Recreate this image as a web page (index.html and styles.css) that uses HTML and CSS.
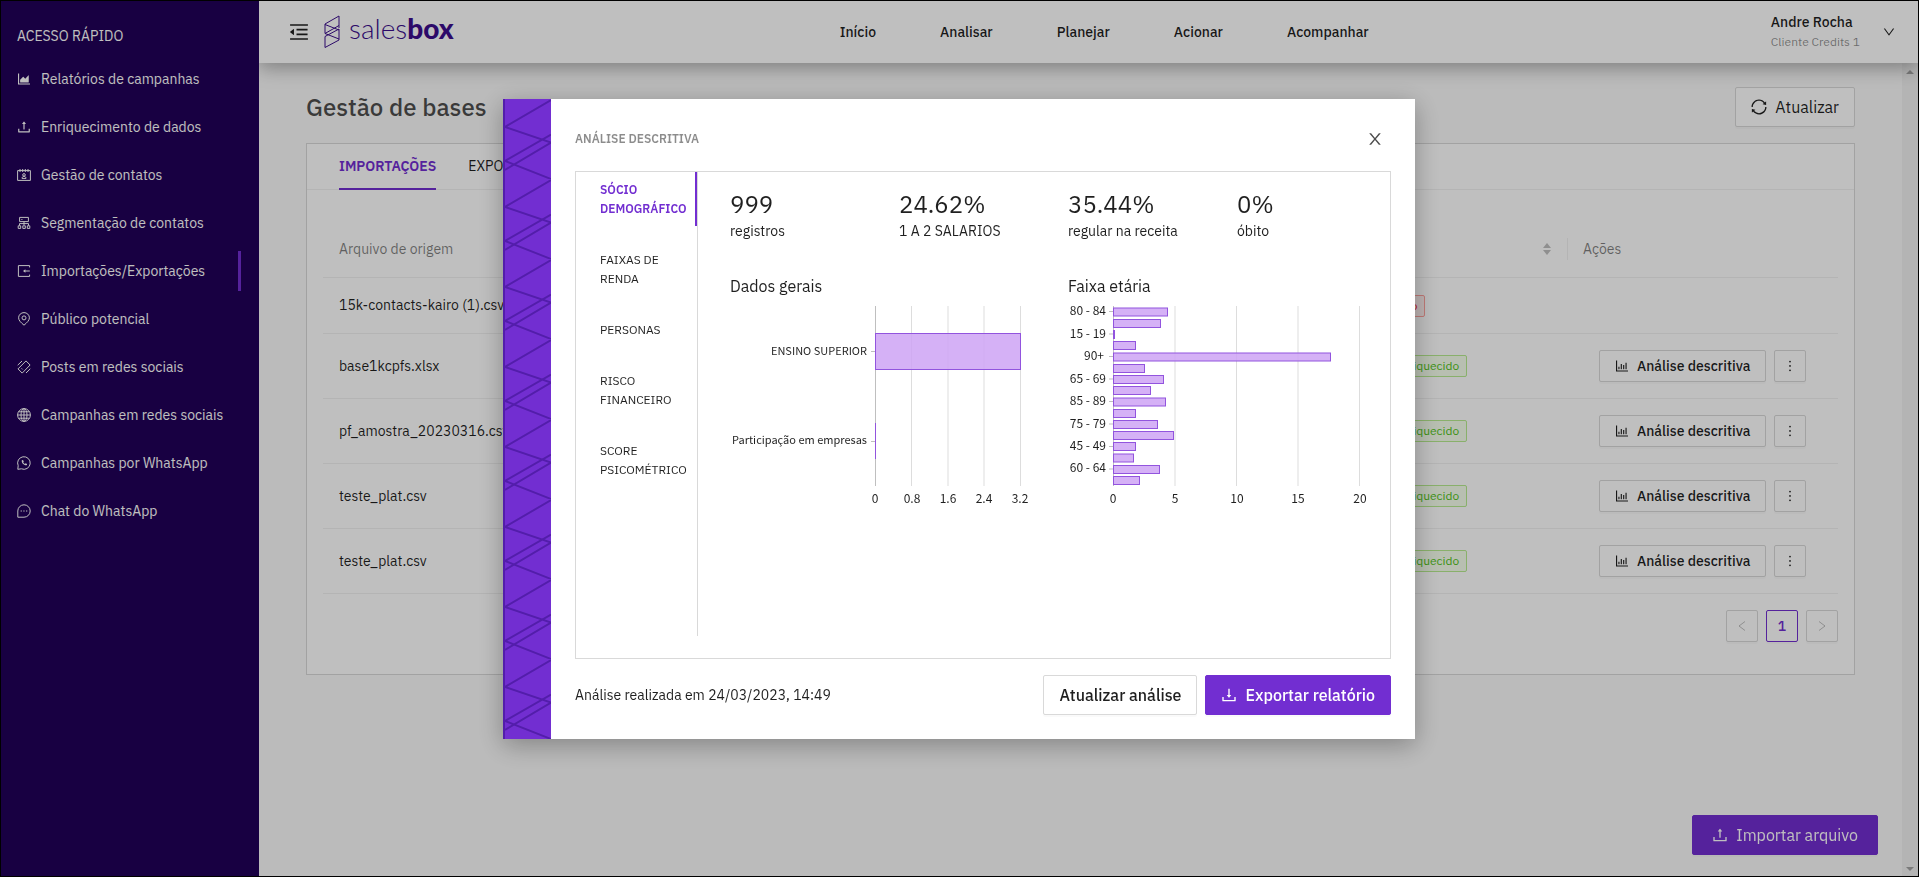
FILE: index.html
```html
<!DOCTYPE html>
<html lang="pt-BR">

<head>
    <meta charset="UTF-8">
    <meta name="viewport" content="width=device-width, initial-scale=1.0">
    <title>Salesbox - Gestão de bases</title>
    <link rel="stylesheet" href="styles.css">
</head>

<body>
    <svg class="sprite" aria-hidden="true">
        <symbol id="icon-area-chart" viewBox="64 64 896 896">
            <path d="M888 792H200V168c0-4.4-3.6-8-8-8h-56c-4.4 0-8 3.6-8 8v688c0 4.4 3.6 8 8 8h752c4.4 0 8-3.6 8-8v-56c0-4.4-3.6-8-8-8zm-616-64h536c4.4 0 8-3.6 8-8V284c0-7.2-8.7-10.7-13.7-5.7L592 488.6l-125.4-124a8.03 8.03 0 00-11.3 0l-189 189.6a7.87 7.87 0 00-2.3 5.6V720c0 4.4 3.6 8 8 8z" />
        </symbol>
        <symbol id="icon-upload" viewBox="64 64 896 896">
            <path d="M400 317.7h73.9V656c0 4.4 3.6 8 8 8h60c4.4 0 8-3.6 8-8V317.7H624c6.7 0 10.4-7.7 6.3-12.9L518.3 163a8 8 0 00-12.6 0l-112 141.7c-4.1 5.3-.4 13 6.3 13zM878 626h-60c-4.4 0-8 3.6-8 8v154H214V634c0-4.4-3.6-8-8-8h-60c-4.4 0-8 3.6-8 8v198c0 17.7 14.3 32 32 32h684c17.7 0 32-14.3 32-32V634c0-4.4-3.6-8-8-8z" />
        </symbol>
        <symbol id="icon-download" viewBox="64 64 896 896">
            <path d="M505.7 661a8 8 0 0012.6 0l112-141.7c4.1-5.2.4-12.9-6.3-12.9h-74.1V168c0-4.4-3.6-8-8-8h-60c-4.4 0-8 3.6-8 8v338.3H400c-6.7 0-10.4 7.7-6.3 12.9l112 141.8zM878 626h-60c-4.4 0-8 3.6-8 8v154H214V634c0-4.4-3.6-8-8-8h-60c-4.4 0-8 3.6-8 8v198c0 17.7 14.3 32 32 32h684c17.7 0 32-14.3 32-32V634c0-4.4-3.6-8-8-8z" />
        </symbol>
        <symbol id="icon-bar-chart" viewBox="64 64 896 896">
            <path d="M888 792H200V168c0-4.4-3.6-8-8-8h-56c-4.4 0-8 3.6-8 8v688c0 4.4 3.6 8 8 8h752c4.4 0 8-3.6 8-8v-56c0-4.4-3.6-8-8-8zm-600-80h56c4.4 0 8-3.6 8-8V560c0-4.4-3.6-8-8-8h-56c-4.4 0-8 3.6-8 8v144c0 4.4 3.6 8 8 8zm152 0h56c4.4 0 8-3.6 8-8V384c0-4.4-3.6-8-8-8h-56c-4.4 0-8 3.6-8 8v320c0 4.4 3.6 8 8 8zm152 0h56c4.4 0 8-3.6 8-8V462c0-4.4-3.6-8-8-8h-56c-4.4 0-8 3.6-8 8v242c0 4.4 3.6 8 8 8zm152 0h56c4.4 0 8-3.6 8-8V304c0-4.4-3.6-8-8-8h-56c-4.4 0-8 3.6-8 8v400c0 4.4 3.6 8 8 8z" />
        </symbol>
        <symbol id="icon-more" viewBox="64 64 896 896">
            <path d="M456 231a56 56 0 10112 0 56 56 0 10-112 0zm0 280a56 56 0 10112 0 56 56 0 10-112 0zm0 280a56 56 0 10112 0 56 56 0 10-112 0z" />
        </symbol>
        <symbol id="icon-down" viewBox="64 64 896 896">
            <path d="M884 256h-75c-5.1 0-9.9 2.5-12.9 6.6L512 654.2 227.9 262.6c-3-4.1-7.8-6.6-12.9-6.6h-75c-6.5 0-10.3 7.4-6.5 12.7l352.6 486.1c12.8 17.6 39 17.6 51.7 0l352.6-486.1c3.9-5.3.1-12.7-6.4-12.7z" />
        </symbol>
        <symbol id="icon-close" viewBox="64 64 896 896">
            <path d="M563.8 512l262.5-312.9c4.4-5.2.7-13.1-6.1-13.1h-79.8c-4.7 0-9.2 2.1-12.3 5.7L511.6 449.8 295.1 191.7c-3-3.6-7.5-5.7-12.3-5.7H203c-6.8 0-10.5 7.9-6.1 13.1L459.4 512 196.9 824.9A7.95 7.95 0 00203 838h79.8c4.7 0 9.2-2.1 12.3-5.7l216.5-258.1 216.5 258.1c3 3.6 7.5 5.7 12.3 5.7h79.8c6.8 0 10.5-7.9 6.1-13.1L563.8 512z" />
        </symbol>
        <symbol id="icon-sync" viewBox="64 64 896 896">
            <path d="M168 504.2c1-43.7 10-86.1 26.9-126 17.3-41 42.1-77.7 73.7-109.4S337 212.3 378 195c42.4-17.9 87.4-27 133.9-27s91.5 9.1 133.8 27A341.5 341.5 0 01755 268.8c9.9 9.9 19.2 20.4 27.8 31.4l-60.2 47a8 8 0 003 14.1l175.7 43c5 1.2 9.9-2.6 9.9-7.7l.8-180.9c0-6.7-7.7-10.5-12.9-6.3l-56.4 44.1C765.8 155.1 646.2 92 511.8 92 282.7 92 96.3 275.6 92 503.8a8 8 0 008 8.2h60c4.4 0 7.9-3.5 8-7.8zm756 7.8h-60c-4.4 0-7.9 3.5-8 7.8-1 43.7-10 86.1-26.9 126-17.3 41-42.1 77.8-73.7 109.4A342.45 342.45 0 01512.1 856a342.24 342.24 0 01-243.2-100.8c-9.9-9.9-19.2-20.4-27.8-31.4l60.2-47a8 8 0 00-3-14.1l-175.7-43c-5-1.2-9.9 2.6-9.9 7.7l-.7 181c0 6.7 7.7 10.5 12.9 6.3l56.4-44.1C258.2 868.9 377.8 932 512.2 932c229.2 0 415.5-183.7 419.8-411.8a8 8 0 00-8-8.2z" />
        </symbol>
        <symbol id="icon-menu-fold" viewBox="64 64 896 896">
            <path d="M408 442h480c4.4 0 8-3.6 8-8v-56c0-4.4-3.6-8-8-8H408c-4.4 0-8 3.6-8 8v56c0 4.4 3.6 8 8 8zm-8 204c0 4.4 3.6 8 8 8h480c4.4 0 8-3.6 8-8v-56c0-4.4-3.6-8-8-8H408c-4.4 0-8 3.6-8 8v56zm504-486H120c-4.4 0-8 3.6-8 8v56c0 4.4 3.6 8 8 8h784c4.4 0 8-3.6 8-8v-56c0-4.4-3.6-8-8-8zm0 632H120c-4.4 0-8 3.6-8 8v56c0 4.4 3.6 8 8 8h784c4.4 0 8-3.6 8-8v-56c0-4.4-3.6-8-8-8zM115.4 518.9L271.7 642c5.8 4.6 14.4.5 14.4-6.9V388.9c0-7.4-8.5-11.5-14.4-6.9L115.4 505.1a8.74 8.74 0 000 13.8z" />
        </symbol>
    </svg>

    <div class="app">
        <aside class="sidebar">
            <h2>Acesso rápido</h2>
            <ul>
                <li><a href="#"><svg class="icon"><use href="#icon-area-chart" /></svg>Relatórios de campanhas</a></li>
                <li><a href="#"><svg class="icon"><use href="#icon-upload" /></svg>Enriquecimento de dados</a></li>
                <li><a href="#">
                    <svg class="icon icon-line" viewBox="0 0 14 14">
                        <path d="M.6 2.6h12.8v9.8H.6zM3 1v3M5.7 1v3M8.3 1v3M11 1v3M5 10.4c0-1.3.8-2 2-2s2 .7 2 2z" />
                        <circle cx="7" cy="6.9" r="1.3" />
                    </svg>Gestão de contatos</a></li>
                <li><a href="#">
                    <svg class="icon icon-line" viewBox="0 0 14 14">
                        <path d="M2.6 1.4h8.8v4.2H2.6zM7 5.6V9M2.5 9.6V7.6h9v2M4.4 3.5h1M1.2 9.8h2.5v2.6H1.2zM5.8 9.8h2.5v2.6H5.8zM10.3 9.8h2.5v2.6h-2.5z" />
                    </svg>Segmentação de contatos</a></li>
                <li class="active"><a href="#">
                    <svg class="icon icon-line" viewBox="0 0 14 14">
                        <path d="M12.6 3.4V1.6H1.4v10.8h11.2v-1.8M7 7h5.8" />
                        <path d="M6 7l2.4-1.8v3.6z" class="fill" />
                    </svg>Importações/Exportações</a></li>
                <li><a href="#">
                    <svg class="icon icon-line" viewBox="0 0 14 14">
                        <path d="M7 13.2c-3-2.6-5.4-4.8-5.4-7.4a5.4 5.2 0 0110.8 0c0 2.6-2.4 4.8-5.4 7.4z" />
                        <circle cx="7" cy="5.9" r="2" />
                    </svg>Público potencial</a></li>
                <li><a href="#">
                    <svg class="icon icon-line" viewBox="0 0 14 14">
                        <path d="M9 .9L13.1 5 5.2 13.1 1 8.9zM.7 5.2L5 1M9 13l4.3-4.2" />
                        <path d="M4.6 8.4l1 1" />
                    </svg>Posts em redes sociais</a></li>
                <li><a href="#">
                    <svg class="icon icon-line" viewBox="0 0 14 14">
                        <circle cx="7" cy="7" r="6.4" />
                        <ellipse cx="7" cy="7" rx="3" ry="6.4" />
                        <path d="M7 .6v12.8M.6 7h12.8M1.6 3.8h10.8M1.6 10.2h10.8" />
                    </svg>Campanhas em redes sociais</a></li>
                <li><a href="#">
                    <svg class="icon icon-line" viewBox="0 0 14 14">
                        <path d="M.8 13.3l.4-3.6A6.3 6.3 0 114.4 12.8z" />
                        <path d="M4.8 4.2c-.6 2.6 2.3 5.5 5 5l.3-1.1-1.5-.8-.7.6c-.8-.3-1.4-.9-1.7-1.7l.6-.7-.8-1.5z" class="fill" />
                    </svg>Campanhas por WhatsApp</a></li>
                <li><a href="#">
                    <svg class="icon icon-line" viewBox="0 0 14 14">
                        <path d="M.8 13.2V7A6.2 6.2 0 117 13.2z" />
                        <path d="M3.6 7h1.3M6.3 7h1.3M9 7h1.3" />
                    </svg>Chat do WhatsApp</a></li>
            </ul>
        </aside>

        <div class="main">
            <header class="header">
                <button class="icon-button" aria-label="Recolher menu"><svg class="icon-large"><use href="#icon-menu-fold" /></svg></button>
                <a class="logo" href="#">
                    <svg viewBox="0 0 16 34">
                        <path d="M15 13V1L1 9v9.5L15 10.5M1 9.5l14 5.5M1 21.5L15 14v11L1 32.5zM1 18.5l14 5.5" />
                    </svg>
                    <span>sales<b>box</b></span>
                </a>
                <nav>
                    <a href="#">Início</a>
                    <a href="#">Analisar</a>
                    <a href="#">Planejar</a>
                    <a href="#">Acionar</a>
                    <a href="#">Acompanhar</a>
                </nav>
                <button class="user">
                    <span>
                        <span class="user-name">Andre Rocha</span>
                        <span class="user-account">Cliente Credits 1</span>
                    </span>
                    <svg class="icon-small"><use href="#icon-down" /></svg>
                </button>
            </header>

            <div class="body">
                <main class="content">
                    <div class="page-title">
                        <h1>Gestão de bases</h1>
                        <button class="btn btn-large"><svg class="icon-medium"><use href="#icon-sync" /></svg>Atualizar</button>
                    </div>

                    <section class="card">
                        <div class="tabs">
                            <button class="tab active">IMPORTAÇÕES</button>
                            <button class="tab">EXPORTAÇÕES</button>
                        </div>
                        <div class="card-body">
                            <table>
                                <colgroup>
                                    <col>
                                    <col class="col-status">
                                    <col class="col-actions">
                                </colgroup>
                                <thead>
                                    <tr>
                                        <th>Arquivo de origem</th>
                                        <th>
                                            <button class="sorter" aria-label="Ordenar">
                                                <svg viewBox="0 0 8 12"><path d="M0 5l4-5 4 5zM0 7h8l-4 5z" /></svg>
                                            </button>
                                        </th>
                                        <th>Ações</th>
                                    </tr>
                                </thead>
                                <tbody>
                                    <tr>
                                        <td>15k-contacts-kairo (1).csv</td>
                                        <td><span class="tag tag-error">Erro</span></td>
                                        <td></td>
                                    </tr>
                                    <tr>
                                        <td>base1kcpfs.xlsx</td>
                                        <td><span class="tag tag-success">Enriquecido</span></td>
                                        <td>
                                            <div class="actions">
                                                <button class="btn"><svg class="icon"><use href="#icon-bar-chart" /></svg>Análise descritiva</button>
                                                <button class="btn btn-square" aria-label="Mais opções"><svg class="icon"><use href="#icon-more" /></svg></button>
                                            </div>
                                        </td>
                                    </tr>
                                    <tr>
                                        <td>pf_amostra_20230316.csv</td>
                                        <td><span class="tag tag-success">Enriquecido</span></td>
                                        <td>
                                            <div class="actions">
                                                <button class="btn"><svg class="icon"><use href="#icon-bar-chart" /></svg>Análise descritiva</button>
                                                <button class="btn btn-square" aria-label="Mais opções"><svg class="icon"><use href="#icon-more" /></svg></button>
                                            </div>
                                        </td>
                                    </tr>
                                    <tr>
                                        <td>teste_plat.csv</td>
                                        <td><span class="tag tag-success">Enriquecido</span></td>
                                        <td>
                                            <div class="actions">
                                                <button class="btn"><svg class="icon"><use href="#icon-bar-chart" /></svg>Análise descritiva</button>
                                                <button class="btn btn-square" aria-label="Mais opções"><svg class="icon"><use href="#icon-more" /></svg></button>
                                            </div>
                                        </td>
                                    </tr>
                                    <tr>
                                        <td>teste_plat.csv</td>
                                        <td><span class="tag tag-success">Enriquecido</span></td>
                                        <td>
                                            <div class="actions">
                                                <button class="btn"><svg class="icon"><use href="#icon-bar-chart" /></svg>Análise descritiva</button>
                                                <button class="btn btn-square" aria-label="Mais opções"><svg class="icon"><use href="#icon-more" /></svg></button>
                                            </div>
                                        </td>
                                    </tr>
                                </tbody>
                            </table>
                            <div class="pagination">
                                <button class="btn btn-square" aria-label="Página anterior" disabled>
                                    <svg class="icon-small icon-line" viewBox="0 0 12 12"><path d="M9 1.5L3 6l6 4.5" /></svg>
                                </button>
                                <button class="btn btn-square current">1</button>
                                <button class="btn btn-square" aria-label="Próxima página" disabled>
                                    <svg class="icon-small icon-line" viewBox="0 0 12 12"><path d="M3 1.5L9 6l-6 4.5" /></svg>
                                </button>
                            </div>
                        </div>
                    </section>
                </main>
                <div class="scrollbar" aria-hidden="true">
                    <svg viewBox="0 0 8 4"><path d="M0 4l4-4 4 4z" /></svg>
                    <svg viewBox="0 0 8 4"><path d="M0 0h8L4 4z" /></svg>
                </div>
            </div>
        </div>
    </div>

    <button class="btn btn-large btn-primary btn-import"><svg class="icon-medium"><use href="#icon-upload" /></svg>Importar arquivo</button>

    <div class="overlay">
        <div class="modal" role="dialog" aria-labelledby="modalTitle">
            <svg class="modal-stripe" aria-hidden="true">
                <defs>
                    <pattern id="stripe" width="46" height="80" patternUnits="userSpaceOnUse">
                        <path d="M46 1L0 28l46 15.5M46 35.5L0 62M46 43.5L0 71M0 62l46 18M46 81l-4 2" />
                    </pattern>
                </defs>
                <rect width="46" height="100%" fill="url(#stripe)" />
            </svg>

            <div class="modal-content">
                <div class="modal-header">
                    <h2 id="modalTitle">ANÁLISE DESCRITIVA</h2>
                    <button class="icon-button" aria-label="Fechar"><svg class="icon-medium"><use href="#icon-close" /></svg></button>
                </div>

                <div class="analysis">
                    <div class="side-tabs">
                        <button class="side-tab active">SÓCIO DEMOGRÁFICO</button>
                        <button class="side-tab">FAIXAS DE RENDA</button>
                        <button class="side-tab">PERSONAS</button>
                        <button class="side-tab">RISCO FINANCEIRO</button>
                        <button class="side-tab">SCORE PSICOMÉTRICO</button>
                    </div>

                    <div class="panel">
                        <div class="stats">
                            <div class="stat"><strong>999</strong><span>registros</span></div>
                            <div class="stat"><strong>24.62%</strong><span>1 A 2 SALARIOS</span></div>
                            <div class="stat"><strong>35.44%</strong><span>regular na receita</span></div>
                            <div class="stat"><strong>0%</strong><span>óbito</span></div>
                        </div>

                        <div class="charts">
                            <div>
                                <h3>Dados gerais</h3>
                                <svg class="chart" viewBox="0 0 322 204">
                                    <g class="grid">
                                        <path d="M181.5 0v180M218 0v180M254 0v180M290.5 0v180" />
                                        <path class="axis" d="M145.5 0v180M141 45.5h4M141 135.5h4" />
                                    </g>
                                    <g class="bars">
                                        <rect x="145.5" y="27.5" width="145" height="36" />
                                        <path d="M145.5 117v36" />
                                    </g>
                                    <g class="labels-y">
                                        <text x="137" y="49">ENSINO SUPERIOR</text>
                                        <text x="137" y="138">Participação em empresas</text>
                                    </g>
                                    <g class="labels-x">
                                        <text x="145" y="197">0</text>
                                        <text x="182" y="197">0.8</text>
                                        <text x="218" y="197">1.6</text>
                                        <text x="254" y="197">2.4</text>
                                        <text x="290" y="197">3.2</text>
                                    </g>
                                </svg>
                            </div>
                            <div>
                                <h3>Faixa etária</h3>
                                <svg class="chart" viewBox="0 0 322 204">
                                    <g class="grid">
                                        <path d="M107 0v180M168.5 0v180M230 0v180M291.5 0v180" />
                                        <path class="axis" d="M45.5 0v180M41 5.5h4M41 28h4M41 50.5h4M41 73h4M41 95.5h4M41 118h4M41 140.5h4M41 163h4" />
                                    </g>
                                    <g class="bars">
                                        <rect x="45.5" y="2" width="54" height="8" />
                                        <rect x="45.5" y="13.5" width="47" height="8" />
                                        <rect x="45.5" y="24.5" width="1" height="8" />
                                        <rect x="45.5" y="35.5" width="22" height="8" />
                                        <rect x="45.5" y="47" width="217" height="8" />
                                        <rect x="45.5" y="58.5" width="31" height="8" />
                                        <rect x="45.5" y="69.5" width="50" height="8" />
                                        <rect x="45.5" y="80.5" width="37" height="8" />
                                        <rect x="45.5" y="92" width="52" height="8" />
                                        <rect x="45.5" y="103.5" width="22" height="8" />
                                        <rect x="45.5" y="114.5" width="44" height="8" />
                                        <rect x="45.5" y="125.5" width="60" height="8" />
                                        <rect x="45.5" y="136.5" width="22" height="8" />
                                        <rect x="45.5" y="148" width="20" height="8" />
                                        <rect x="45.5" y="159.5" width="46" height="8" />
                                        <rect x="45.5" y="170.5" width="26" height="8" />
                                    </g>
                                    <g class="labels-y labels-age">
                                        <text x="38" y="9">80 - 84</text>
                                        <text x="38" y="32">15 - 19</text>
                                        <text x="36" y="54">90+</text>
                                        <text x="38" y="77">65 - 69</text>
                                        <text x="38" y="99">85 - 89</text>
                                        <text x="38" y="122">75 - 79</text>
                                        <text x="38" y="144">45 - 49</text>
                                        <text x="38" y="166">60 - 64</text>
                                    </g>
                                    <g class="labels-x">
                                        <text x="45" y="197">0</text>
                                        <text x="107" y="197">5</text>
                                        <text x="169" y="197">10</text>
                                        <text x="230" y="197">15</text>
                                        <text x="292" y="197">20</text>
                                    </g>
                                </svg>
                            </div>
                        </div>
                    </div>
                </div>

                <div class="modal-footer">
                    <p>Análise realizada em 24/03/2023, 14:49</p>
                    <button class="btn btn-large">Atualizar análise</button>
                    <button class="btn btn-large btn-primary"><svg class="icon-medium"><use href="#icon-download" /></svg>Exportar relatório</button>
                </div>
            </div>
        </div>
    </div>
</body>

</html>
```
FILE: styles.css
```css
* {
    box-sizing: border-box;
}

body {
    margin: 0;
    height: 100vh;
    border: 1px solid #000;
    overflow: hidden;
    font-family: "IBM Plex Sans", "Liberation Sans", Arial, sans-serif;
    font-size: 14px;
    line-height: 22px;
    color: rgba(0, 0, 0, 0.88);
    background-color: #fafafa;
}

h1,
h2,
h3,
p,
ul {
    margin: 0;
    padding: 0;
}

a {
    color: inherit;
    text-decoration: none;
}

button {
    padding: 0;
    border: none;
    background: none;
    font: inherit;
    color: inherit;
    cursor: pointer;
}

svg {
    display: block;
    flex: none;
    fill: currentColor;
}

.sprite {
    display: none;
}

.icon {
    width: 14px;
    height: 14px;
}

.icon-small {
    width: 12px;
    height: 12px;
}

.icon-medium {
    width: 16px;
    height: 16px;
}

.icon-large {
    width: 20px;
    height: 20px;
}

.icon-line {
    fill: none;
    stroke: currentColor;
}

.icon-line .fill {
    fill: currentColor;
    stroke: none;
}

/* Layout */
.app {
    display: flex;
    height: 100%;
}

.main {
    flex: 1;
    min-width: 0;
    display: flex;
    flex-direction: column;
}

.body {
    flex: 1;
    min-height: 0;
    display: flex;
}

.content {
    flex: 1;
    min-width: 0;
    padding: 24px 47px;
}

/* Sidebar */
.sidebar {
    position: relative;
    z-index: 2;
    width: 258px;
    padding: 24px 18px 24px 16px;
    background-color: #210158;
    color: #fff;
}

.sidebar h2 {
    margin-bottom: 12px;
    font-size: 14px;
    font-weight: 400;
    text-transform: uppercase;
}

.sidebar ul {
    list-style: none;
}

.sidebar li {
    margin-bottom: 8px;
}

.sidebar li.active {
    border-right: 3px solid #722ed1;
}

.sidebar a {
    display: flex;
    align-items: center;
    gap: 10px;
    height: 40px;
}

/* Header */
.header {
    position: relative;
    z-index: 1;
    display: flex;
    align-items: center;
    height: 62px;
    padding: 0 23px 0 30px;
    background-color: #fff;
    box-shadow: 0 4px 20px rgba(0, 0, 0, 0.35);
}

.icon-button {
    display: flex;
}

.logo {
    display: flex;
    align-items: center;
    gap: 9px;
    margin-left: 15px;
    font-family: Lato, sans-serif;
    font-size: 28px;
    font-weight: 300;
    color: #3b0d8c;
}

.logo svg {
    width: 16px;
    height: 34px;
    fill: none;
    stroke: currentColor;
}

.logo span {
    padding-bottom: 8px;
}

.logo b {
    font-weight: 900;
}

.header nav {
    flex: 1;
    display: flex;
    justify-content: center;
    gap: 64px;
    font-weight: 500;
}

.user {
    display: flex;
    align-items: center;
    gap: 23px;
    padding-left: 16px;
    text-align: left;
}

.user-name,
.user-account {
    display: block;
    line-height: 19px;
}

.user-name {
    font-weight: 500;
}

.user-account {
    font-size: 12px;
    color: rgba(0, 0, 0, 0.45);
}

/* Buttons */
.btn {
    display: flex;
    align-items: center;
    justify-content: center;
    gap: 8px;
    height: 32px;
    padding: 0 15px;
    border: 1px solid #d9d9d9;
    border-radius: 2px;
    background-color: #fff;
    box-shadow: 0 2px 0 rgba(0, 0, 0, 0.02);
    white-space: nowrap;
}

.btn-large {
    height: 40px;
    font-size: 16px;
}

.btn-square {
    width: 32px;
    padding: 0;
}

.btn-primary {
    border-color: #722ed1;
    background-color: #722ed1;
    color: #fff;
}

.btn:disabled {
    color: rgba(0, 0, 0, 0.25);
}

.btn-import {
    position: fixed;
    right: 41px;
    bottom: 22px;
    padding: 0 19px;
}

/* Page */
.page-title {
    display: flex;
    justify-content: space-between;
    align-items: center;
    margin-bottom: 16px;
}

.page-title h1 {
    font-size: 24px;
    font-weight: 500;
    color: rgba(0, 0, 0, 0.7);
}

.card {
    border: 1px solid #d9d9d9;
    background-color: #fff;
}

.tabs {
    display: flex;
    gap: 32px;
    padding: 0 32px;
    border-bottom: 1px solid #f0f0f0;
}

.tab {
    height: 46px;
    margin-bottom: -1px;
    border-bottom: 2px solid transparent;
}

.tab.active {
    border-color: #722ed1;
    font-weight: 600;
    color: #722ed1;
}

.card-body {
    padding: 32px 16px;
}

table {
    width: 100%;
    border-collapse: collapse;
    table-layout: fixed;
}

.col-status {
    width: 196px;
}

.col-actions {
    width: 271px;
}

th,
td {
    height: 56px;
    padding: 0 16px;
    border-bottom: 1px solid #f0f0f0;
    text-align: left;
}

th {
    height: 55px;
    font-weight: 400;
    color: rgba(0, 0, 0, 0.5);
}

th:last-child {
    background: linear-gradient(#f0f0f0, #f0f0f0) no-repeat left center / 1px 22px;
}

.sorter {
    display: block;
    margin-left: auto;
    color: #bfbfbf;
}

.sorter svg {
    width: 8px;
    height: 12px;
}

.actions {
    display: flex;
    gap: 8px;
    padding: 16px 0 16px 16px;
    font-weight: 500;
}

.tag {
    display: inline-block;
    padding: 0 7px;
    border: 1px solid;
    border-radius: 2px;
    font-size: 12px;
    line-height: 20px;
}

.tag-error {
    color: #f5222d;
    background-color: #fff1f0;
    border-color: #ffa39e;
}

.tag-success {
    color: #52c41a;
    background-color: #f6ffed;
    border-color: #b7eb8f;
}

.pagination {
    display: flex;
    justify-content: flex-end;
    gap: 8px;
    margin-top: 16px;
}

.pagination .current {
    border-color: #722ed1;
    font-weight: 500;
    color: #722ed1;
}

.scrollbar {
    display: flex;
    flex-direction: column;
    justify-content: space-between;
    align-items: center;
    width: 16px;
    padding: 7px 0 5px;
    background-color: #f1f1f1;
    color: #a3a3a3;
}

.scrollbar svg {
    width: 8px;
    height: 4px;
}

/* Modal */
.overlay {
    position: fixed;
    inset: 0 1px 0 0;
    z-index: 10;
    padding-top: 99px;
    background-color: rgba(0, 0, 0, 0.25);
}

.modal {
    display: flex;
    width: 912px;
    max-width: 100%;
    margin: 0 auto;
    background-color: #fff;
    box-shadow: 0 6px 24px rgba(0, 0, 0, 0.3);
}

.modal-stripe {
    width: 48px;
    height: auto;
    border-left: 2px solid #531dab;
    background-color: #722ed1;
}

.modal-stripe path {
    fill: none;
    stroke: #531dab;
    stroke-width: 2;
}

.modal-content {
    flex: 1;
    min-width: 0;
    padding: 24px;
}

.modal-header {
    display: flex;
    justify-content: space-between;
    align-items: center;
    height: 32px;
    padding-right: 8px;
    margin-bottom: 16px;
}

.modal-header h2 {
    font-size: 12px;
    font-weight: 600;
    color: rgba(0, 0, 0, 0.45);
}

.modal-header .icon-button {
    color: rgba(0, 0, 0, 0.7);
}

.analysis {
    display: flex;
    min-height: 488px;
    padding-bottom: 22px;
    border: 1px solid #d9d9d9;
}

.side-tabs {
    display: flex;
    flex-direction: column;
    gap: 16px;
    width: 122px;
    border-right: 1px solid #d9d9d9;
}

.side-tab {
    padding: 8px 0 8px 24px;
    border-right: 2px solid transparent;
    font-size: 12px;
    line-height: 19px;
    text-align: left;
}

.side-tab.active {
    border-color: #722ed1;
    font-weight: 600;
    color: #722ed1;
}

.panel {
    flex: 1;
    min-width: 0;
    padding: 16px 0 0 32px;
}

.stats {
    display: grid;
    grid-template-columns: repeat(4, 1fr);
    gap: 16px;
    margin-bottom: 32px;
}

.stat strong,
.stat span {
    display: block;
}

.stat strong {
    font-size: 24px;
    font-weight: 400;
    line-height: 32px;
}

.charts {
    display: grid;
    grid-template-columns: repeat(2, 1fr);
    gap: 16px;
}

.charts h3 {
    margin-bottom: 8px;
    font-size: 16px;
    font-weight: 400;
    line-height: 24px;
}

.chart {
    width: 100%;
    overflow: visible;
    font-family: "Noto Sans CJK SC", sans-serif;
    font-size: 12px;
}

.grid path {
    fill: none;
    stroke: #ddd;
}

.grid .axis {
    stroke: #bfbfbf;
}

.bars rect,
.bars path {
    fill: rgba(206, 163, 244, 0.85);
    stroke: #9254de;
}

.labels-y {
    font-size: 11px;
    text-anchor: end;
}

.labels-age {
    font-size: 12px;
}

.labels-x {
    text-anchor: middle;
}

.modal-footer {
    display: flex;
    align-items: center;
    gap: 8px;
    margin-top: 16px;
}

.modal-footer p {
    flex: 1;
}

.modal-footer .btn {
    font-weight: 500;
}
```
